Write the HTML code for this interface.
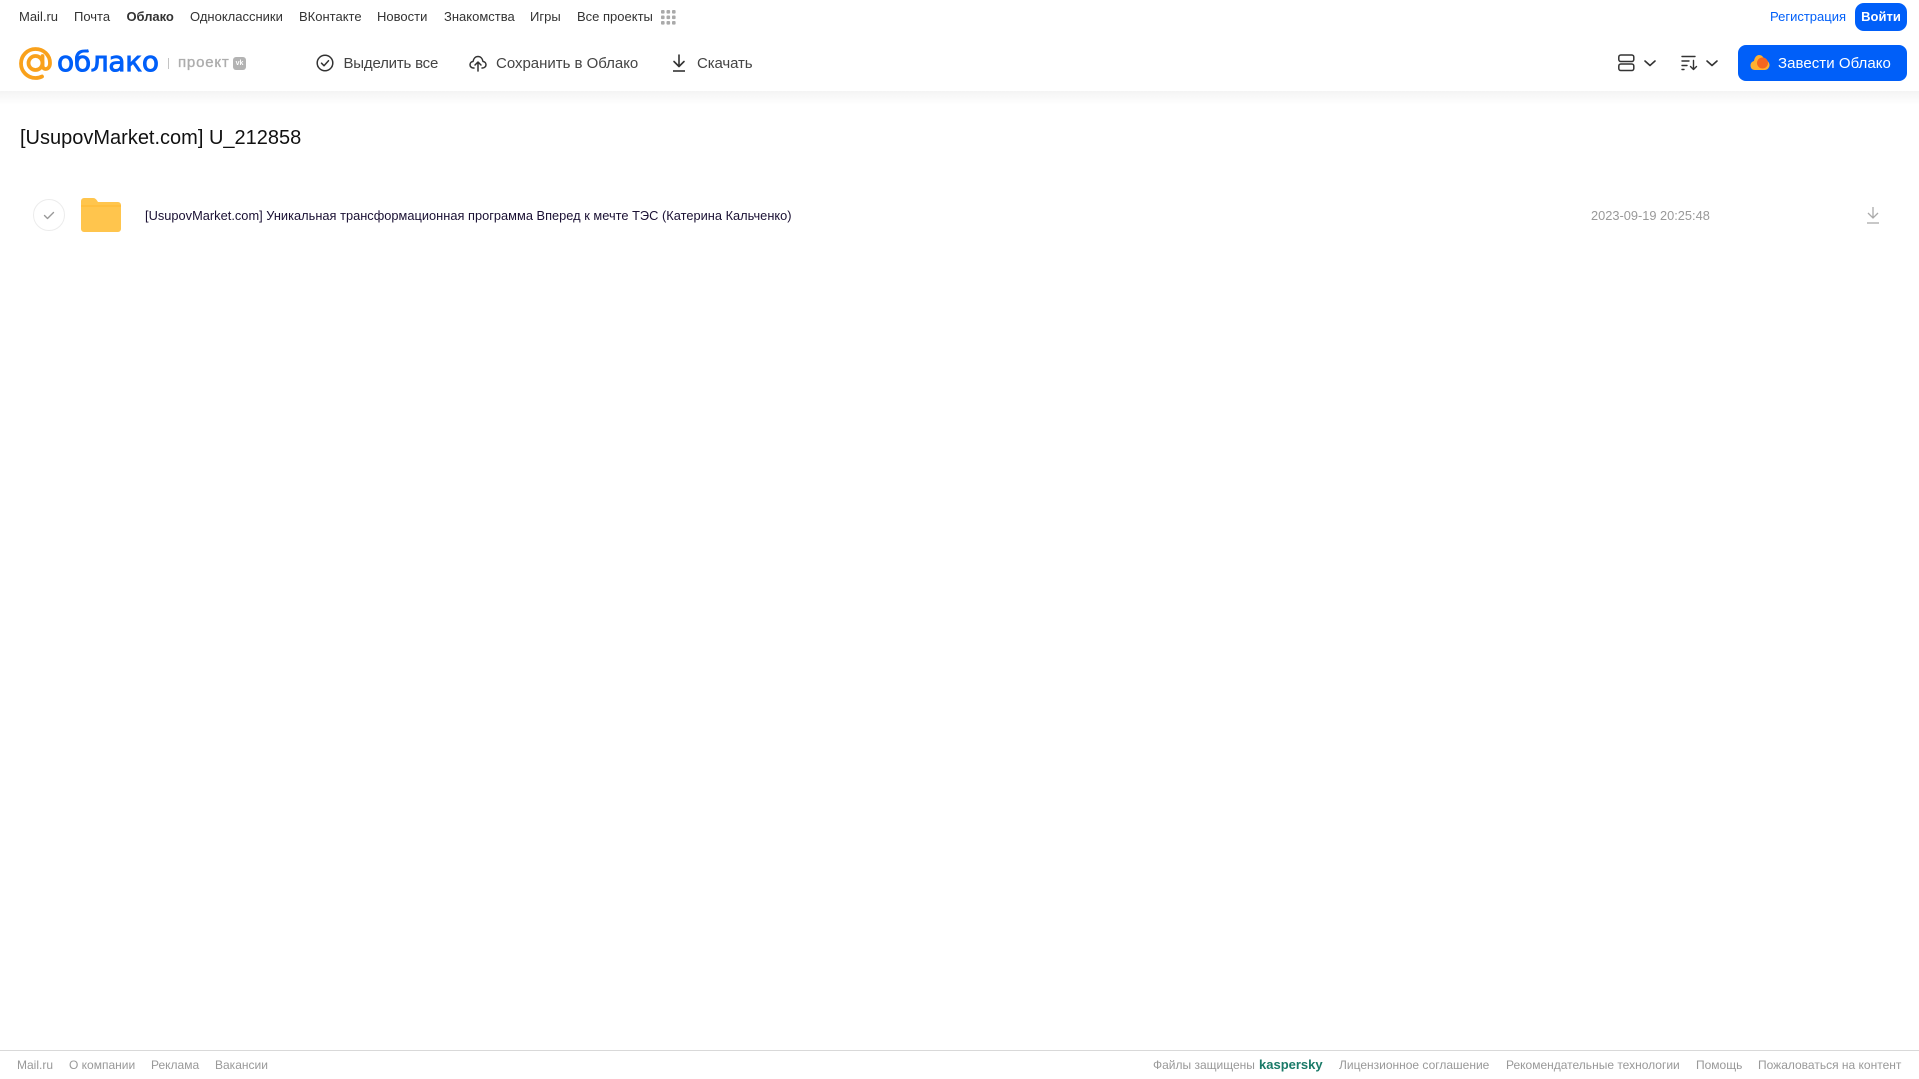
<!DOCTYPE html>
<html lang="ru"><head><meta charset="utf-8"><title>Облако</title>
<style>
html,body{margin:0;padding:0;background:#fff}
body{width:1919px;height:1079px;position:relative;overflow:hidden;font-family:"Liberation Sans",sans-serif}
.t{position:absolute;white-space:nowrap;line-height:20px}
.n{font-size:13px;color:#333;top:7px}
.h{font-size:15px;color:#444;top:54px;letter-spacing:-.12px}
.f{font-size:12px;color:#999;top:1055px}
svg{position:absolute;overflow:visible}
</style></head><body>
<div style="position:absolute;left:0;top:91px;width:1919px;height:14px;background:linear-gradient(#f4f4f4,#fff)"></div>
<span class="t n" style="left:19px">Mail.ru</span>
<span class="t n" style="left:74px">Почта</span>
<span class="t n" style="left:126.500px;font-weight:700;letter-spacing:-.05px">Облако</span>
<span class="t n" style="left:190px">Одноклассники</span>
<span class="t n" style="left:299px">ВКонтакте</span>
<span class="t n" style="left:377px">Новости</span>
<span class="t n" style="left:444px">Знакомства</span>
<span class="t n" style="left:530px">Игры</span>
<span class="t n" style="left:577px">Все проекты</span>
<svg style="left:661px;top:10px" width="15" height="15" fill="#aaa"><rect x="0" y="0" width="3.600" height="3.600" rx="1"/><rect x="5.500" y="0" width="3.600" height="3.600" rx="1"/><rect x="11" y="0" width="3.600" height="3.600" rx="1"/><rect x="0" y="5.500" width="3.600" height="3.600" rx="1"/><rect x="5.500" y="5.500" width="3.600" height="3.600" rx="1"/><rect x="11" y="5.500" width="3.600" height="3.600" rx="1"/><rect x="0" y="11" width="3.600" height="3.600" rx="1"/><rect x="5.500" y="11" width="3.600" height="3.600" rx="1"/><rect x="11" y="11" width="3.600" height="3.600" rx="1"/></svg>

<svg style="left:19px;top:47px" width="33" height="33" viewBox="0 0 33 33" fill="none" stroke="#f9a11b" stroke-width="3.800"><circle cx="16.500" cy="16" r="7"/><path d="M23.500 9v9.500c0 5 7.500 5 7.500-2.500C31 8 24.500 2 16.500 2S2 8.500 2 16.500 8.500 31 16.500 31c2.500 0 4.500-.5 6.500-1.500" stroke-linecap="round"/></svg>
<span class="t" style="left:57px;top:44px;line-height:36px;font-family:'DejaVu Sans',sans-serif;font-size:28px;font-weight:400;color:#005ff9;-webkit-text-stroke:.9px #005ff9;letter-spacing:-.3px">облако</span>
<div style="position:absolute;left:168px;top:58px;width:1px;height:11px;background:#c4c4c4"></div>
<span class="t" style="left:178px;top:53px;font-size:15px;color:#adadad;-webkit-text-stroke:.35px #adadad;letter-spacing:.8px">проект</span>
<div style="position:absolute;left:233px;top:57px;width:13px;height:13px;border-radius:3px;background:#b3b3b3;color:#fff;font-size:7px;font-weight:700;line-height:13px;text-align:center">vk</div>

<svg style="left:316px;top:54px" width="18" height="18" viewBox="0 0 18 18" fill="none" stroke="#333" stroke-width="1.500"><circle cx="9" cy="9" r="7.800"/><path d="M5.500 9.200l2.500 2.500 4.500-5" stroke-linecap="round" stroke-linejoin="round"/></svg>
<span class="t h" style="left:343.500px;letter-spacing:-.2px">Выделить все</span>
<svg style="left:469px;top:54px" width="18" height="18" viewBox="0 0 18 18" fill="none" stroke="#333" stroke-width="1.500" stroke-linecap="round" stroke-linejoin="round"><path d="M5 14H4.500C2.500 14 1 12.500 1 10.700s1.300-3 3-3.200C4.500 4.500 6.500 2.500 9 2.500s4.500 2 5 5c1.700.2 3 1.500 3 3.200S15.500 14 13.500 14H13"/><path d="M9 17V8.500M6 11l3-3 3 3"/></svg>
<span class="t h" style="left:496px;letter-spacing:-.02px">Сохранить в Облако</span>
<svg style="left:671px;top:54px" width="16" height="18" viewBox="0 0 16 18" fill="none" stroke="#333" stroke-width="1.600"><path d="M8 1v11M3 7.500L8 12.500l5-5" stroke-linecap="round" stroke-linejoin="round"/><path d="M2 17h12"/></svg>
<span class="t h" style="left:697px">Скачать</span>

<span class="t n" style="left:1770px;color:#005ff9">Регистрация</span>
<div style="position:absolute;left:1855px;top:3px;width:52px;height:28px;border-radius:9px;background:#005ff9;color:#fff;font-size:13px;font-weight:700;line-height:28px;text-align:center">Войти</div>

<svg style="left:1618px;top:54px" width="17" height="18" viewBox="0 0 17 18" fill="none" stroke="#333" stroke-width="1.500"><rect x=".8" y="1" width="15" height="6.500" rx="2"/><rect x=".8" y="10" width="15" height="6.500" rx="2"/></svg>
<svg style="left:1644px;top:60px" width="12" height="7" fill="none" stroke="#333" stroke-width="1.600" stroke-linecap="round" stroke-linejoin="round"><path d="M1 1l5 4.500L11 1"/></svg>
<svg style="left:1681px;top:55px" width="17" height="16" viewBox="0 0 17 16" fill="none" stroke="#333" stroke-width="1.400" stroke-linecap="round" stroke-linejoin="round"><path d="M1 1.500h13M1 6h7M1 10.500h5M1 14.500h2M12.500 5.500v9M9.500 11.500l3 3 3-3"/></svg>
<svg style="left:1706px;top:60px" width="12" height="7" fill="none" stroke="#333" stroke-width="1.600" stroke-linecap="round" stroke-linejoin="round"><path d="M1 1l5 4.500L11 1"/></svg>

<div style="position:absolute;left:1738px;top:45px;width:169px;height:36px;border-radius:8px;background:#005ff9"></div>
<svg style="left:1750px;top:54px" width="20" height="17" viewBox="0 0 20 17"><path d="M5 16C2 16 .5 14 .5 11.500S2 7.500 4 7C4.500 3.500 6.500 1 9 1c3 0 5 2.500 5.500 5 3 .2 5 2.500 5 5s-2 5-5 5z" fill="#ffb02e"/><circle cx="12.500" cy="9" r="5.500" fill="#f4661f"/></svg>
<span class="t h" style="left:1778px;color:#fff;letter-spacing:.05px">Завести Облако</span>

<span class="t" style="left:20px;top:126px;line-height:24px;font-size:20px;color:#111">[UsupovMarket.com] U_212858</span>

<svg style="left:33px;top:199px" width="32" height="32" viewBox="0 0 32 32" fill="none"><circle cx="16" cy="16" r="15.500" stroke="#ececec"/><path d="M11.500 16.500l3 3 6-6" stroke="#999" stroke-width="1.400" stroke-linecap="round" stroke-linejoin="round"/></svg>
<svg style="left:81px;top:198px" width="40" height="34" viewBox="0 0 40 34"><path d="M0 3a3 3 0 0 1 3-3h9c2 0 3 1 4 2.500l1 1.500h20a3 3 0 0 1 3 3v24a3 3 0 0 1-3 3H3a3 3 0 0 1-3-3z" fill="#ffc54d"/><path d="M0 8h40" stroke="#ffb62e" stroke-width="1"/></svg>
<span class="t" style="left:145px;top:206px;font-size:12.800px;letter-spacing:.02px;color:#1a1033">[UsupovMarket.com] Уникальная трансформационная программа Вперед к мечте ТЭС (Катерина Кальченко)</span>
<span class="t" style="left:1591px;top:206px;font-size:12.800px;color:#999">2023-09-19 20:25:48</span>
<svg style="left:1866px;top:206px" width="14" height="18" viewBox="0 0 14 18" fill="none" stroke="#aaa" stroke-width="1.300"><path d="M7 1v11M2 7l5 5 5-5"/><path d="M1 17h12"/></svg>

<div style="position:absolute;left:0;top:1050px;width:1919px;height:1px;background:#d9d9d9"></div>
<span class="t f" style="left:17px">Mail.ru</span>
<span class="t f" style="left:69px">О компании</span>
<span class="t f" style="left:151px">Реклама</span>
<span class="t f" style="left:215px">Вакансии</span>
<span class="t f" style="left:1153px">Файлы защищены</span>
<span class="t" style="left:1259px;top:1055px;font-size:13px;font-weight:700;color:#1a7a68">kaspersky</span>
<span class="t f" style="left:1339px">Лицензионное соглашение</span>
<span class="t f" style="left:1506px">Рекомендательные технологии</span>
<span class="t f" style="left:1696px">Помощь</span>
<span class="t f" style="left:1758px">Пожаловаться на контент</span>
</body></html>
